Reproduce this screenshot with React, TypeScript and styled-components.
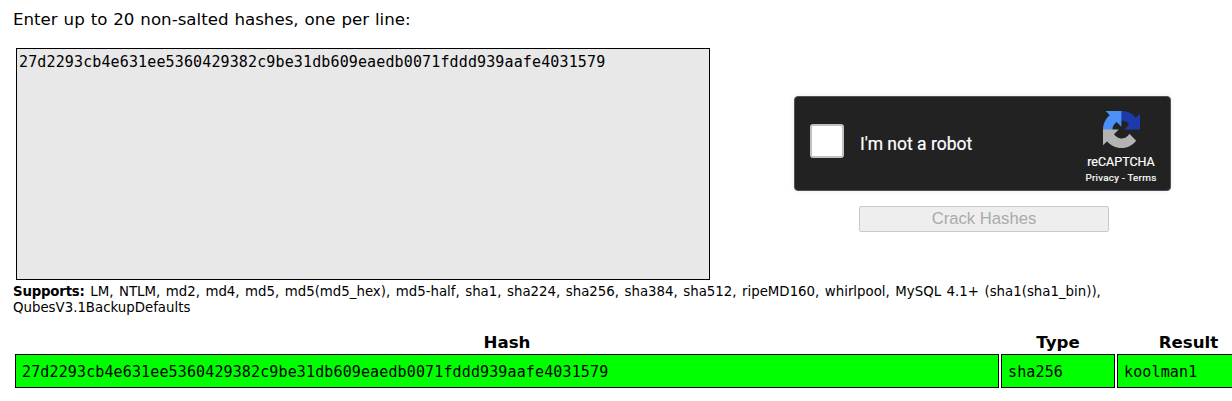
import React from "react";
import styled, { createGlobalStyle } from "styled-components";

const GlobalStyle = createGlobalStyle`
  * { box-sizing: border-box; }
  body { margin: 0; background: #fff; color: #000; overflow: hidden; }
`;

const Page = styled.main`
  width: 1232px;
  height: 401px;
  overflow: hidden;
  padding: 10px 0 0 13px;
  font-family: Verdana, "DejaVu Sans", sans-serif;
  font-size: 16.67px;
`;

const Intro = styled.p`
  margin: 0;
  height: 38px;
  line-height: 20px;
  font-size: 16.67px;
  word-spacing: 0.6px;
  white-space: nowrap;
`;

const FormRow = styled.div`
  display: flex;
  height: 232px;
  padding-left: 3px;
`;

const HashInput = styled.textarea`
  display: block;
  width: 694px;
  height: 232px;
  margin: 0;
  padding: 3px 2px;
  border: 1px solid #000;
  border-radius: 0;
  outline: none;
  resize: none;
  overflow: hidden;
  background: #e8e8e8;
  color: #000;
  font: 15px/20px "DejaVu Sans Mono", monospace;
  letter-spacing: 0.13px;
`;

const Actions = styled.div`
  display: flex;
  flex-direction: column;
  gap: 15px;
  width: 377px;
  margin: 48px 0 0 84px;
`;

const Captcha = styled.div`
  display: flex;
  width: 377px;
  height: 95px;
  padding: 0 13px 0 15px;
  border: 1px solid #525252;
  border-radius: 4px;
  background: #222;
  color: #fff;
  box-shadow: 0 0 5px rgba(0, 0, 0, 0.08);
  font-family: Roboto, sans-serif;
`;

const Checkbox = styled.span`
  width: 34px;
  height: 34px;
  margin-top: 27px;
  border: 2px solid #c1c1c1;
  border-radius: 3px;
  background: #fff;
`;

const CaptchaLabel = styled.span`
  flex: 1;
  margin: 36px 0 0 16px;
  font-size: 17.5px;
  line-height: 22px;
  -webkit-text-stroke: 0.2px #fff;
`;

const Brand = styled.div`
  display: flex;
  flex-direction: column;
  align-items: center;
  width: 72px;
  padding-top: 14px;
`;

const BrandName = styled.span`
  margin-top: 6px;
  font-size: 12.5px;
  line-height: 16px;
  -webkit-text-stroke: 0.2px #fff;
`;

const BrandLinks = styled.span`
  margin-top: 2px;
  font-size: 9.9px;
  line-height: 12px;
  letter-spacing: 0.26px;
  white-space: nowrap;
  -webkit-text-stroke: 0.2px #fff;
`;

const CrackButton = styled.button`
  width: 250px;
  height: 26px;
  margin-left: 65px;
  padding: 0;
  border: 1px solid #cacaca;
  border-radius: 2px;
  background: #eee;
  color: #aaa;
  font: 16.67px/22px "Liberation Sans", Arial, sans-serif;
`;

const Supports = styled.p`
  margin: 4px 0 0;
  height: 46px;
  font-size: 13.33px;
  line-height: 16px;
  word-spacing: 1.28px;
  white-space: nowrap;

  b {
    letter-spacing: -0.2px;
  }
`;

const Results = styled.table`
  width: 1249px;
  table-layout: fixed;
  border-collapse: separate;
  border-spacing: 2px;
`;

const Heading = styled.th<{ $width: number }>`
  width: ${(p) => p.$width}px;
  height: 20px;
  padding: 2px 0 0;
  font-size: 16.67px;
  line-height: 18px;
  font-weight: 700;
`;

const Cell = styled.td`
  height: 34px;
  padding: 1px 6px 0;
  border: 1px solid #000;
  background: #0f0;
  font: 15px/20px "DejaVu Sans Mono", monospace;
  letter-spacing: 0.13px;
`;

const HASH = "27d2293cb4e631ee5360429382c9be31db609eaedb0071fddd939aafe4031579";

const RecaptchaLogo = () => (
  <svg width="37" height="37" viewBox="0 0 64 64" aria-hidden="true">
    <path fill="#1c3aa9" d="M64 31.955l-.033-1.37V4.687l-7.16 7.16C50.948 4.674 42.033.093 32.05.093c-10.4 0-19.63 4.96-25.474 12.64l11.736 11.86a15.55 15.55 0 0 1 4.754-5.334c2.05-1.6 4.952-2.906 8.968-2.906.485 0 .86.057 1.135.163 4.976.393 9.288 3.14 11.828 7.124l-8.307 8.307L64 31.953" />
    <path fill="#4a90f7" d="M31.862.094l-1.37.033H4.594l7.16 7.16C4.58 13.147 0 22.06 0 32.046c0 10.4 4.96 19.63 12.64 25.474L24.5 45.784a15.55 15.55 0 0 1-5.334-4.754c-1.6-2.05-2.906-4.952-2.906-8.968 0-.485.057-.86.163-1.135.393-4.976 3.14-9.288 7.124-11.828l8.307 8.307L31.86.095" />
    <path fill="#b3b3b3" d="M.001 32.045l.033 1.37v25.898l7.16-7.16c5.86 7.173 14.774 11.754 24.76 11.754 10.4 0 19.63-4.96 25.474-12.64l-11.736-11.86a15.55 15.55 0 0 1-4.754 5.334c-2.05 1.6-4.952 2.906-8.968 2.906-.485 0-.86-.057-1.135-.163-4.976-.393-9.288-3.14-11.828-7.124l8.307-8.307c-10.522.04-22.4.066-27.295-.005" />
  </svg>
);

export default function App() {
  return (
    <Page>
      <GlobalStyle />
      <Intro>Enter up to 20 non-salted hashes, one per line:</Intro>
      <FormRow>
        <HashInput defaultValue={HASH} spellCheck={false} />
        <Actions>
          <Captcha>
            <Checkbox role="checkbox" aria-checked="false" />
            <CaptchaLabel>I'm not a robot</CaptchaLabel>
            <Brand>
              <RecaptchaLogo />
              <BrandName>reCAPTCHA</BrandName>
              <BrandLinks>Privacy - Terms</BrandLinks>
            </Brand>
          </Captcha>
          <CrackButton disabled>Crack Hashes</CrackButton>
        </Actions>
      </FormRow>
      <Supports>
        <b>Supports:</b> LM, NTLM, md2, md4, md5, md5(md5_hex), md5-half, sha1, sha224, sha256, sha384, sha512,
        {" "}ripeMD160, whirlpool, MySQL 4.1+ (sha1(sha1_bin)),
        <br />
        QubesV3.1BackupDefaults
      </Supports>
      <Results>
        <thead>
          <tr>
            <Heading $width={984}>Hash</Heading>
            <Heading $width={114}>Type</Heading>
            <Heading $width={143}>Result</Heading>
          </tr>
        </thead>
        <tbody>
          <tr>
            <Cell>{HASH}</Cell>
            <Cell>sha256</Cell>
            <Cell>koolman1</Cell>
          </tr>
        </tbody>
      </Results>
    </Page>
  );
}
